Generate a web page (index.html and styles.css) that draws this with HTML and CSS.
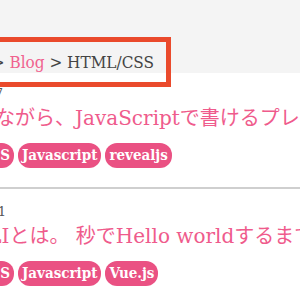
FILE: index.html
```html
<!DOCTYPE html>
<html>
	<head>
		<meta charset="UTF-8">
		<title>HTML/CSS</title>
		<link rel="stylesheet" href="styles.css">
	</head>
	<body>
		<div class="band">
			<div class="crumb">Home &gt; <a href="#">Blog</a> &gt; HTML/CSS</div>
		</div>
		<ul class="posts">
			<li class="post">
				<div class="date d1">2020.03.27</div>
				<h2 class="title t1">りながら、JavaScriptで書けるプレゼンツール</h2>
				<div class="tags">
					<span class="tag">CSS</span>
					<span class="tag">Javascript</span>
					<span class="tag">revealjs</span>
				</div>
			</li>
			<li class="post">
				<div class="date d2">2020.02.21</div>
				<h2 class="title t2">CLIとは。 秒でHello worldするまで</h2>
				<div class="tags">
					<span class="tag">CSS</span>
					<span class="tag">Javascript</span>
					<span class="tag">Vue.js</span>
				</div>
			</li>
		</ul>
	</body>
</html>
```

FILE: styles.css
```css
*{
	margin:0px;
	padding:0px;
	box-sizing:border-box;
}
html,body{
	width:300px;
	height:300px;
	overflow:hidden;
	background:#fff;
}
body{
	font-family:"DejaVu Serif","Noto Sans CJK JP",serif;
	color:#444;
}
.band{
	height:73px;
	background:#f4f4f4;
	padding-top:37px;
}
.crumb{
	position:relative;
	z-index:2;
	width:260px;
	height:50px;
	margin-left:-89px;
	padding-right:12px;
	padding-top:10px;
	border:5px solid #ea4a2c;
	text-align:right;
	font-size:17px;
	font-stretch:semi-condensed;
	white-space:nowrap;
	color:#444;
}
.crumb a{
	color:#f0628f;
	text-decoration:none;
}
.posts{
	list-style:none;
	padding-top:12px;
}
.post{
	padding-bottom:19px;
	border-bottom:2px solid #cfcfcf;
}
.post + .post{
	border-bottom:none;
	padding-top:14px;
}
.date{
	width:100px;
	height:18px;
	text-align:right;
	font-size:13px;
	line-height:18px;
	color:#555;
	white-space:nowrap;
}
.d1{
	margin-left:-97px;
}
.d2{
	margin-left:-94px;
}
.title{
	font-size:20px;
	font-weight:normal;
	line-height:30px;
	color:#ef5b8c;
	white-space:nowrap;
}
.t1{
	margin-left:-25px;
}
.t2{
	margin-left:-27px;
}
.tags{
	display:flex;
	gap:4px;
	margin-top:10px;
	white-space:nowrap;
	margin-left:-24px;
}
.tag{
	display:block;
	height:25px;
	line-height:25px;
	padding:0 4px;
	border-radius:12px;
	background:#ea5183;
	color:#fff;
	font-weight:bold;
	font-size:15px;
	font-stretch:condensed;
}
```
